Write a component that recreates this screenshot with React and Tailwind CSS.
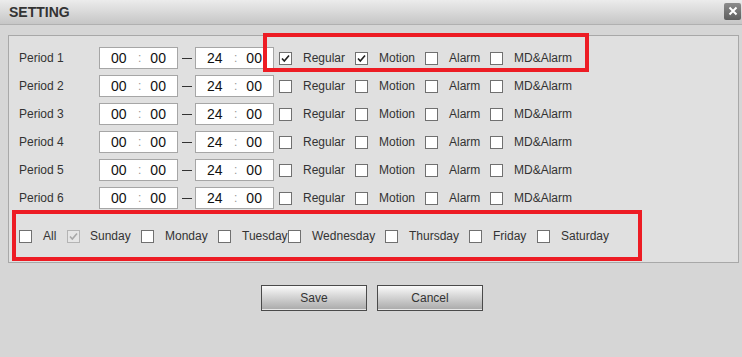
import React from "react";

const font = { fontFamily: '"Liberation Sans", Arial, sans-serif' };

function Box({ checked, disabled }) {
  return (
    <span
      className={
        "relative inline-block w-[13px] h-[13px] shrink-0 border " +
        (disabled ? "border-[#b4b4b4] bg-[#e6e6e6]" : "border-[#707070] bg-white")
      }
    >
      {checked && (
        <svg viewBox="0 0 13 13" className="absolute -left-px -top-px w-[13px] h-[13px]">
          <path
            d="M3 6.5 L5.3 9 L10 3.5"
            fill="none"
            stroke={disabled ? "#a8a8a8" : "#222"}
            strokeWidth="1.6"
          />
        </svg>
      )}
    </span>
  );
}

function Check({ label, checked, disabled, w, gap = "ml-[11px]" }) {
  return (
    <div className={"flex items-center shrink-0 " + w}>
      <Box checked={checked} disabled={disabled} />
      <span className={gap + " text-[12px] text-[#333]"}>{label}</span>
    </div>
  );
}

function TimeBox({ a, b }) {
  return (
    <div className="w-[79px] h-[22px] bg-white border border-[#a6a6a6] flex items-center text-[14px] text-[#111]">
      <span className="ml-[11px] w-[16px]">{a}</span>
      <span className="ml-[11px] text-[#999] text-[12px]">:</span>
      <span className="ml-[9px]">{b}</span>
    </div>
  );
}

function PeriodRow({ n, first }) {
  return (
    <div className="flex items-center h-[28px]">
      <span className="w-[80px] text-[12px] text-[#333]">Period {n}</span>
      <TimeBox a="00" b="00" />
      <div className="w-[17px] flex justify-center">
        <span className="block w-[10px] h-px bg-[#333]" />
      </div>
      <TimeBox a="24" b="00" />
      <div className="ml-[5px] flex items-center">
        <Check label="Regular" checked={first} w="w-[76px]" />
        <Check label="Motion" checked={first} w="w-[70px]" />
        <Check label="Alarm" w="w-[65px]" />
        <Check label="MD&Alarm" w="w-[100px]" />
      </div>
    </div>
  );
}

export default function App() {
  const days = [
    ["All", false, false, "w-[48px]"],
    ["Sunday", true, true, "w-[74px]"],
    ["Monday", false, false, "w-[77px]"],
    ["Tuesday", false, false, "w-[70px]"],
    ["Wednesday", false, false, "w-[97px]"],
    ["Thursday", false, false, "w-[84px]"],
    ["Friday", false, false, "w-[68px]"],
    ["Saturday", false, false, "w-[80px]"],
  ];
  return (
    <div style={font} className="relative w-[742px] h-[357px] bg-[#d6d6d6] overflow-hidden">
      <div className="h-[25px] flex items-center justify-between bg-gradient-to-b from-[#ececec] to-[#c6c6c6] border-b border-[#b0b0b0]">
        <span className="ml-[9px] text-[14px] font-bold text-[#333]">SETTING</span>
        <div className="mr-[1px] mb-[2px] w-[17px] h-[17px] bg-gradient-to-b from-[#8c8c8c] to-[#5e5e5e] rounded-[2px] flex items-center justify-center">
          <svg viewBox="0 0 10 10" className="w-[10px] h-[10px]">
            <path d="M1.5 1.5 L8.5 8.5 M8.5 1.5 L1.5 8.5" stroke="#fff" strokeWidth="2" />
          </svg>
        </div>
      </div>

      <div className="ml-[8px] mr-[3px] mt-[10px] h-[228px] bg-[#e0e0e0] border border-[#a8a8a8] pl-[10px] pt-[8px]">
        {[1, 2, 3, 4, 5, 6].map((n) => (
          <PeriodRow key={n} n={n} first={n === 1} />
        ))}
        <div className="flex items-center mt-[14px] h-[20px]">
          {days.map(([l, c, d, w]) => (
            <Check key={l} label={l} checked={c} disabled={d} w={w} gap={l === "Sunday" ? "ml-[10px]" : "ml-[11px]"} />
          ))}
        </div>
      </div>

      <div className="flex justify-center gap-[10px] mt-[22px] pl-[2px]">
        {["Save", "Cancel"].map((t) => (
          <button
            key={t}
            className="w-[106px] h-[26px] border border-[#4a4a4a] bg-gradient-to-b from-[#fafafa] to-[#a9a9a9] shadow-[inset_0_-1px_0_#e8e8e8] text-[12px] text-[#333]"
          >
            {t}
          </button>
        ))}
      </div>

      <div className="absolute left-[263px] top-[33px] w-[326px] h-[39px] border-[4px] border-[#ed1c24]" />
      <div className="absolute left-[12px] top-[210px] w-[630px] h-[51px] border-[4px] border-[#ed1c24]" />
    </div>
  );
}
